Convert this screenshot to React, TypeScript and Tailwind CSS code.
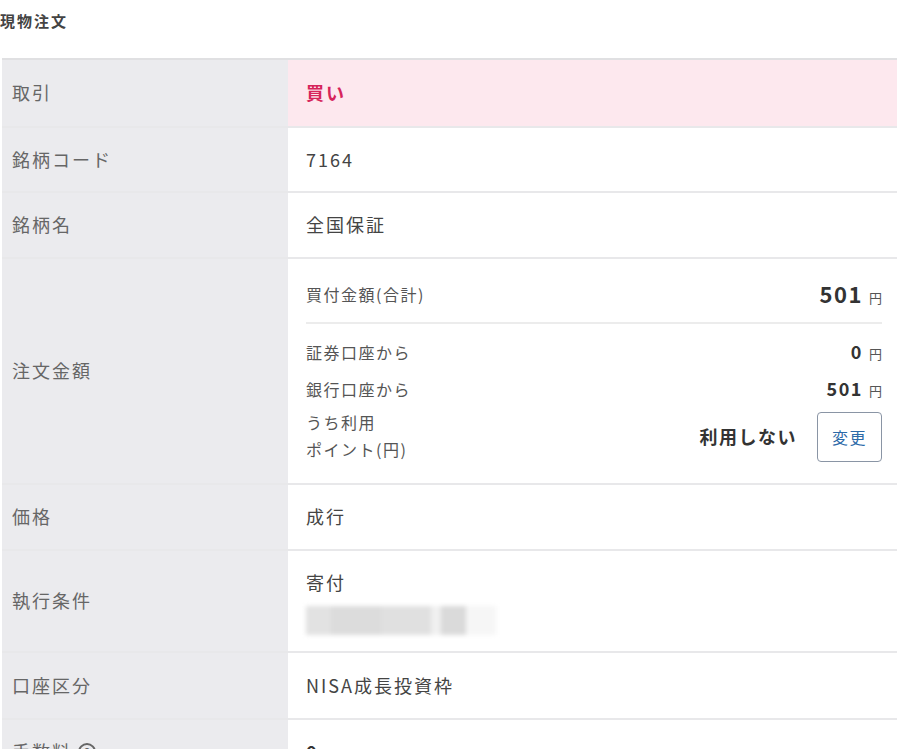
import type { ReactNode } from "react";

const font = { fontFamily: '"Noto Sans CJK JP", "Noto Sans", sans-serif' };

function Row({
  label,
  children,
  className = "",
  valueClass = "",
}: {
  label: ReactNode;
  children: ReactNode;
  className?: string;
  valueClass?: string;
}) {
  return (
    <div className={`grid grid-cols-[286px_1fr] border-b-2 border-[#e8e8ea] ${className}`}>
      <div className="flex items-center bg-[#ebebee] pl-[10px] text-[18px] tracking-[2px] text-[#666]">
        {label}
      </div>
      <div className={`flex items-center pl-[18px] pr-[15px] text-[18px] tracking-[2px] text-[#444] ${valueClass}`}>
        {children}
      </div>
    </div>
  );
}

function Yen({ value, big }: { value: string; big?: boolean }) {
  return (
    <span className="flex items-baseline gap-[6px]">
      <span className={`font-bold text-[#333] ${big ? "text-[22px] tracking-[1.5px]" : "text-[18px] tracking-[1.5px]"}`}>
        {value}
      </span>
      <span className="text-[13px] tracking-normal text-[#555]">円</span>
    </span>
  );
}

export default function App() {
  return (
    <div className="h-[749px] w-[921px] overflow-hidden bg-white" style={font}>
      <h1 className="pt-[10px] text-[15px] font-bold tracking-[2px] text-[#444]">現物注文</h1>
      <div className="ml-[2px] mt-[25px] w-[895px] border-t-2 border-[#e0e0e2]">
        <Row label="取引" className="h-[68px]" valueClass="bg-[#fde8ee]">
          <span className="font-bold text-[#d6245a]">買い</span>
        </Row>
        <Row label="銘柄コード" className="h-[65px]">
          7164
        </Row>
        <Row label="銘柄名" className="h-[66px]">
          全国保証
        </Row>
        <Row label="注文金額" className="h-[226px]" valueClass="!items-start">
          <div className="flex w-full flex-col pt-[21px] text-[16px] tracking-[1.5px] text-[#555]">
            <div className="flex h-[28px] items-center justify-between">
              <span>買付金額(合計)</span>
              <Yen value="501" big />
            </div>
            <div className="mt-[14px] h-[2px] bg-[#ececec]" />
            <div className="mt-[15px] flex h-[26px] items-center justify-between">
              <span>証券口座から</span>
              <Yen value="0" />
            </div>
            <div className="mt-[11px] flex h-[26px] items-center justify-between">
              <span>銀行口座から</span>
              <Yen value="501" />
            </div>
            <div className="mt-[7px] flex items-center justify-between">
              <span className="leading-[27px]">
                うち利用
                <br />
                ポイント(円)
              </span>
              <div className="flex items-center gap-[20px] pt-[2px]">
                <span className="text-[18px] font-bold tracking-[1.5px] text-[#333]">利用しない</span>
                <button className="h-[50px] w-[65px] rounded-[4px] border border-[#8a95a5] bg-white text-[16px] tracking-[1.5px] text-[#2c6aa8]">
                  変更
                </button>
              </div>
            </div>
          </div>
        </Row>
        <Row label="価格" className="h-[66px]">
          成行
        </Row>
        <Row label="執行条件" className="h-[102px]">
          <div className="flex flex-col gap-[10px] pt-[2px]">
            <span>寄付</span>
            <div className="flex h-[29px] w-[190px] blur-[2px]">
              <div className="w-[25px] bg-[#e2e2e2]" />
              <div className="w-[50px] bg-[#dcdcdc]" />
              <div className="w-[50px] bg-[#e0e0e0]" />
              <div className="w-[10px] bg-[#f0f0f0]" />
              <div className="w-[25px] bg-[#dadada]" />
              <div className="w-[30px] bg-[#f6f6f6]" />
            </div>
          </div>
        </Row>
        <Row label="口座区分" className="h-[67px]">
          NISA成長投資枠
        </Row>
        <Row
          label={
            <span className="flex items-center gap-[6px]">
              手数料
              <span className="flex h-[18px] w-[18px] items-center justify-center rounded-full border-2 border-[#666] text-[10px] font-bold tracking-normal">
                ?
              </span>
            </span>
          }
          className="h-[66px]"
        >
          <Yen value="0" />
        </Row>
      </div>
    </div>
  );
}
